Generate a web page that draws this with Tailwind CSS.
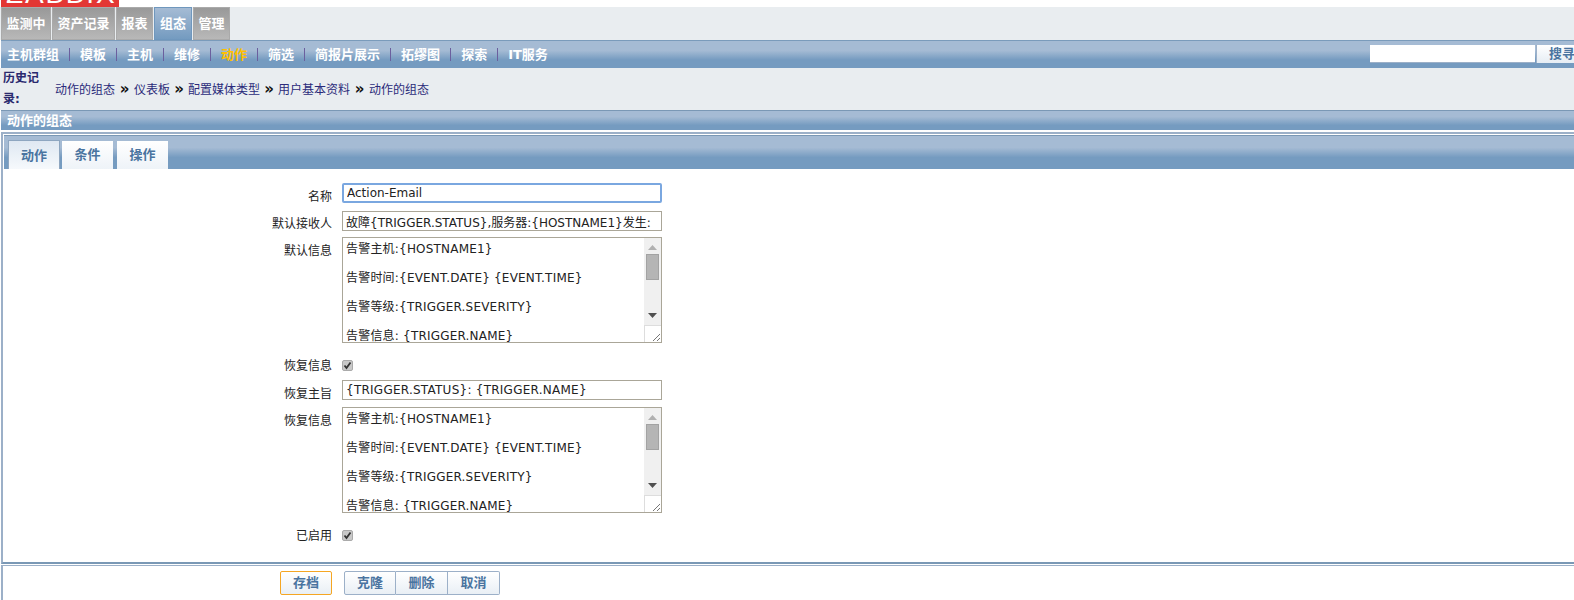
<!DOCTYPE html>
<html lang="zh-CN">
<head>
    <meta charset="UTF-8">
    <title>动作的组态</title>
    <script src="https://cdn.jsdelivr.net/npm/@tailwindcss/browser@4"></script>
</head>
<body class="h-[600px] overflow-hidden bg-white text-[12px] text-[#222] font-['DejaVu_Sans','Noto_Sans_CJK_SC',sans-serif]">
    <!-- Logo, cut by the top of the page -->
    <div class="h-[7px] w-[118px] ml-px overflow-hidden bg-[#e33734]">
        <div class="-mt-[20px] pl-[5px] text-[28px] leading-[28px] text-white font-['Liberation_Sans',sans-serif] tracking-[1.8px] whitespace-nowrap">ZABBIX</div>
    </div>

    <!-- Main menu -->
    <div class="h-[33px] flex pl-px bg-[#e9edf0] text-[13px] font-bold text-white leading-[32px]">
        <a class="w-[50px] mr-px text-center bg-gradient-to-b from-[#999] to-[#b8b8b8] border border-[#aaa]">监测中</a>
        <a class="w-[63px] mr-px text-center bg-gradient-to-b from-[#999] to-[#b8b8b8] border border-[#aaa]">资产记录</a>
        <a class="w-[37px] mr-px text-center bg-gradient-to-b from-[#999] to-[#b8b8b8] border border-[#aaa]">报表</a>
        <a class="w-[38px] mr-px text-center bg-gradient-to-b from-[#a5bbd4] to-[#749bc0] border border-[#6f97bd]">组态</a>
        <a class="w-[37px] text-center bg-gradient-to-b from-[#999] to-[#b8b8b8] border border-[#aaa]">管理</a>
    </div>

    <!-- Sub menu -->
    <div class="h-[28px] ml-px flex items-center pl-[6px] border-t border-[#7a9bbb] bg-[linear-gradient(#a5bbd4_35%,#759bc0_70%)] text-[13px] font-bold text-white">
        <a>主机群组</a><span class="w-px h-[13px] mx-[10px] bg-[#6b5f9e]"></span>
        <a>模板</a><span class="w-px h-[13px] mx-[10px] bg-[#6b5f9e]"></span>
        <a>主机</a><span class="w-px h-[13px] mx-[10px] bg-[#6b5f9e]"></span>
        <a>维修</a><span class="w-px h-[13px] mx-[10px] bg-[#6b5f9e]"></span>
        <a class="text-[#ffc000]">动作</a><span class="w-px h-[13px] mx-[10px] bg-[#6b5f9e]"></span>
        <a>筛选</a><span class="w-px h-[13px] mx-[10px] bg-[#6b5f9e]"></span>
        <a>简报片展示</a><span class="w-px h-[13px] mx-[10px] bg-[#6b5f9e]"></span>
        <a>拓缪图</a><span class="w-px h-[13px] mx-[10px] bg-[#6b5f9e]"></span>
        <a>探索</a><span class="w-px h-[13px] mx-[10px] bg-[#6b5f9e]"></span>
        <a>IT服务</a>
        <div class="ml-auto w-[204px] shrink-0 flex h-[18px] -mt-px">
            <input class="w-[165px] h-[18px] bg-white border-b border-[#9cb0c8] outline-none">
            <button class="ml-px w-[38px] pl-[12px] text-left whitespace-nowrap overflow-hidden bg-gradient-to-b from-white to-[#e6edf4] border-l border-[#9cb0c8] text-[#4a74a0] font-bold leading-[18px]">搜寻</button>
        </div>
    </div>

    <!-- History -->
    <div class="h-[42px] bg-[#e9edf0] flex items-center pl-[3px] text-[#2b2b7a]">
        <div class="w-[48px] shrink-0 font-bold leading-[21px] text-[#2a2a6e]">历史记<br>录:</div>
        <div class="flex items-center ml-[4px] pt-[1px]">
            <a>动作的组态</a><span class="w-[19px] text-center font-bold text-[15px] leading-[15px] text-[#111]">»</span>
            <a>仪表板</a><span class="w-[18px] text-center font-bold text-[15px] leading-[15px] text-[#111]">»</span>
            <a>配置媒体类型</a><span class="w-[18px] text-center font-bold text-[15px] leading-[15px] text-[#111]">»</span>
            <a>用户基本资料</a><span class="w-[19px] text-center font-bold text-[15px] leading-[15px] text-[#111]">»</span>
            <a>动作的组态</a>
        </div>
    </div>

    <!-- Title bar -->
    <div class="h-[20px] ml-px pl-[6px] border-t border-[#7a98b5] bg-[linear-gradient(#a5bbd4_30%,#759bc0_75%)] text-[13px] font-bold text-white leading-[20px]">动作的组态</div>

    <!-- Form box -->
    <div class="h-[432px] mt-[2px] ml-px border-l-2 border-t-2 border-[#9cb0c8] border-b-2 border-b-[#7a98b5] pt-[1px]">
        <div class="h-[34px] ml-px flex items-end pl-[4px] border-t border-[#7a98b5] bg-[linear-gradient(#a5bbd4_35%,#759bc0_65%)] text-[13px] font-bold text-[#4a74a0]">
            <a class="w-[52px] h-[29px] mr-[2px] text-center leading-[30px] bg-gradient-to-b from-[#dfe8f2] to-[#f6f9fc] border-t border-x border-[#8ea6c0]">动作</a>
            <a class="w-[51px] h-[28px] mr-[4px] text-center leading-[28px] bg-gradient-to-b from-white to-[#eef3f8]">条件</a>
            <a class="w-[51px] h-[28px] text-center leading-[28px] bg-gradient-to-b from-white to-[#eef3f8]">操作</a>
        </div>

        <div class="pt-[14px]">
            <div class="flex h-[28px]">
                <label class="w-[339px] text-right pt-[5px] pr-[10px]">名称</label>
                <input value="Action-Email" class="w-[320px] h-[20px] px-[3px] border-2 border-[#7aa7e0] rounded-[2px] outline-none">
            </div>
            <div class="flex h-[26px]">
                <label class="w-[339px] text-right pt-[4px] pr-[10px]">默认接收人</label>
                <input value="故障{TRIGGER.STATUS},服务器:{HOSTNAME1}发生:" class="w-[320px] h-[20px] px-[3px] border border-[#aaa698] outline-none">
            </div>
            <div class="flex h-[123px]">
                <label class="w-[339px] text-right pt-[5px] pr-[10px]">默认信息</label>
                <div class="w-[320px] h-[106px] flex border border-[#aaa698]">
                    <div class="flex-1 pl-[3px] pt-[4px] overflow-hidden leading-[14.5px] tracking-[0.2px] whitespace-pre">告警主机:{HOSTNAME1}

告警时间:{EVENT.DATE} {EVENT.TIME}

告警等级:{TRIGGER.SEVERITY}

告警信息: {TRIGGER.NAME}</div>
                    <div class="w-[17px] shrink-0 flex flex-col items-center bg-[#f0f0f0]">
                        <svg class="mt-[7px]" width="9" height="5" viewBox="0 0 9 5"><path d="M4.5 0L9 5H0z" fill="#b0b0b0"/></svg>
                        <div class="w-[13px] h-[26px] mt-[4px] bg-[#b5b5b5] border border-[#a3a3a3]"></div>
                        <svg class="mt-[33px]" width="9" height="5" viewBox="0 0 9 5"><path d="M0 0H9L4.5 5z" fill="#505050"/></svg>
                        <div class="w-[17px] h-[17px] mt-auto bg-white border-t border-l border-[#ddd] flex items-end justify-end">
                            <svg width="10" height="10" viewBox="0 0 10 10"><path d="M9 2L2 9M9 6L6 9" stroke="#777" fill="none"/></svg>
                        </div>
                    </div>
                </div>
            </div>
            <div class="flex h-[20px]">
                <label class="w-[339px] text-right leading-[12px] pr-[10px]">恢复信息</label>
                <div class="w-[11px] h-[11px] flex items-center justify-center rounded-[2px] bg-[#c9c9c9] border border-[#aaa]">
                    <svg width="9" height="9" viewBox="0 0 9 9"><path d="M1.5 4.5L3.5 7L7.5 1.5" stroke="#333" stroke-width="1.8" fill="none"/></svg>
                </div>
            </div>
            <div class="flex h-[27px]">
                <label class="w-[339px] text-right pt-[5px] pr-[10px]">恢复主旨</label>
                <input value="{TRIGGER.STATUS}: {TRIGGER.NAME}" class="w-[320px] h-[20px] px-[3px] border border-[#aaa698] tracking-[0.25px] outline-none">
            </div>
            <div class="flex h-[123px]">
                <label class="w-[339px] text-right pt-[5px] pr-[10px]">恢复信息</label>
                <div class="w-[320px] h-[106px] flex border border-[#aaa698]">
                    <div class="flex-1 pl-[3px] pt-[4px] overflow-hidden leading-[14.5px] tracking-[0.2px] whitespace-pre">告警主机:{HOSTNAME1}

告警时间:{EVENT.DATE} {EVENT.TIME}

告警等级:{TRIGGER.SEVERITY}

告警信息: {TRIGGER.NAME}</div>
                    <div class="w-[17px] shrink-0 flex flex-col items-center bg-[#f0f0f0]">
                        <svg class="mt-[7px]" width="9" height="5" viewBox="0 0 9 5"><path d="M4.5 0L9 5H0z" fill="#b0b0b0"/></svg>
                        <div class="w-[13px] h-[26px] mt-[4px] bg-[#b5b5b5] border border-[#a3a3a3]"></div>
                        <svg class="mt-[33px]" width="9" height="5" viewBox="0 0 9 5"><path d="M0 0H9L4.5 5z" fill="#505050"/></svg>
                        <div class="w-[17px] h-[17px] mt-auto bg-white border-t border-l border-[#ddd] flex items-end justify-end">
                            <svg width="10" height="10" viewBox="0 0 10 10"><path d="M9 2L2 9M9 6L6 9" stroke="#777" fill="none"/></svg>
                        </div>
                    </div>
                </div>
            </div>
            <div class="flex h-[20px]">
                <label class="w-[339px] text-right leading-[12px] pr-[10px]">已启用</label>
                <div class="w-[11px] h-[11px] flex items-center justify-center rounded-[2px] bg-[#c9c9c9] border border-[#aaa]">
                    <svg width="9" height="9" viewBox="0 0 9 9"><path d="M1.5 4.5L3.5 7L7.5 1.5" stroke="#333" stroke-width="1.8" fill="none"/></svg>
                </div>
            </div>
        </div>
    </div>

    <!-- Footer buttons -->
    <div class="mt-[1px] ml-px h-[40px] border-l-2 border-t border-[#9cb0c8] pl-[277px] pt-[5px] flex text-[13px] font-bold text-[#4a74a0]">
        <button class="w-[52px] h-[24px] mr-[12px] rounded-[2px] bg-gradient-to-b from-white to-[#e9eff5] border border-[#f5a623]">存档</button>
        <button class="w-[52px] h-[24px] rounded-l-[2px] bg-gradient-to-b from-white to-[#e9eff5] border border-[#9cb0c8]">克隆</button>
        <button class="w-[52px] h-[24px] bg-gradient-to-b from-white to-[#e9eff5] border border-l-0 border-[#9cb0c8]">删除</button>
        <button class="w-[52px] h-[24px] rounded-r-[2px] bg-gradient-to-b from-white to-[#e9eff5] border border-l-0 border-[#9cb0c8]">取消</button>
    </div>
</body>
</html>
